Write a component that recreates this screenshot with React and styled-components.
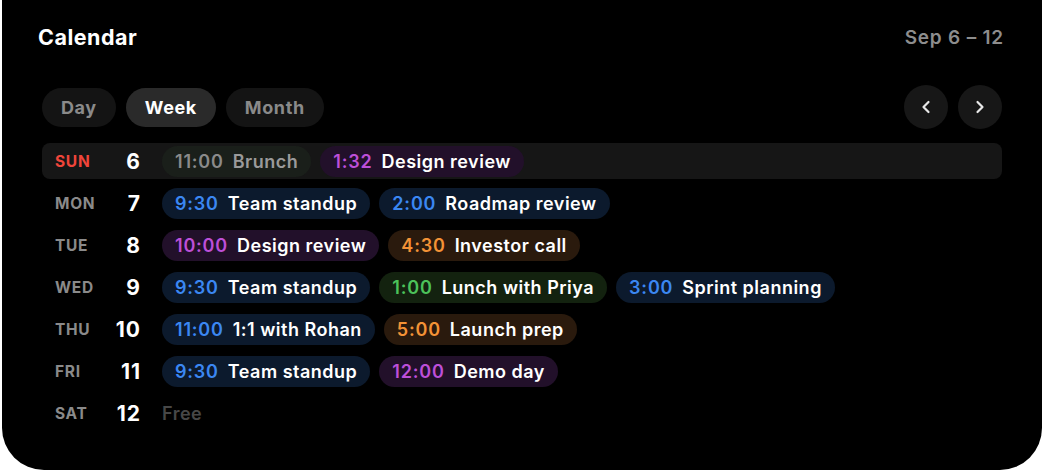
import React from "react";
import styled, { createGlobalStyle } from "styled-components";

const Global = createGlobalStyle`
  html, body { margin: 0; padding: 0; background: #ffffff; }
  body { font-family: Inter, "Noto Sans", "Liberation Sans", sans-serif; -webkit-font-smoothing: antialiased; }
`;

const Card = styled.div`
  margin-left: 2px;
  width: 1040px;
  height: 470px;
  box-sizing: border-box;
  background: #000;
  border-radius: 0 0 42px 42px;
  padding: 23px 40px 0 40px;
  display: flex;
  flex-direction: column;
`;

const Header = styled.div`
  height: 28px;
  display: flex;
  align-items: center;
  justify-content: space-between;
`;

const Title = styled.h1`
  margin: 0 0 0 -4px;
  font-size: 21.5px;
  font-weight: 700;
  color: #fff;
  letter-spacing: 0.5px;
`;

const Range = styled.span`
  font-size: 19px;
  font-weight: 600;
  color: #8d8d8d;
  letter-spacing: 0.8px;
  margin-right: -2px;
`;

const Toolbar = styled.div`
  margin-top: 34px;
  height: 44px;
  display: flex;
  align-items: center;
  justify-content: space-between;
`;

const Tabs = styled.div`
  display: flex;
  gap: 10px;
`;

const Tab = styled.button`
  height: 39px;
  padding: 0 19px;
  border: none;
  border-radius: 20px;
  font-family: inherit;
  font-size: 18px;
  font-weight: 700;
  letter-spacing: 0.6px;
  background: ${p => (p.$active ? "#2a2a2a" : "#141414")};
  color: ${p => (p.$active ? "#ffffff" : "#8a8a8a")};
`;

const Nav = styled.div`
  display: flex;
  gap: 10px;
`;

const NavBtn = styled.button`
  width: 44px;
  height: 44px;
  border-radius: 50%;
  border: none;
  background: #171717;
  display: flex;
  align-items: center;
  justify-content: center;
  padding: 0;
`;

const Rows = styled.div`
  margin-top: 14px;
  display: flex;
  flex-direction: column;
  gap: 6px;
`;

const Row = styled.div`
  height: 36px;
  display: flex;
  align-items: center;
  padding-left: 13px;
  border-radius: 8px;
  background: ${p => (p.$today ? "#161616" : "transparent")};
`;

const DayName = styled.span`
  width: 44px;
  font-size: 15.5px;
  font-weight: 700;
  letter-spacing: 0.7px;
  color: ${p => (p.$today ? "#f0453a" : "#8a8a8a")};
`;

const DayNum = styled.span`
  width: 42px;
  text-align: right;
  font-size: 21px;
  font-weight: 700;
  letter-spacing: 1px;
  color: #fff;
`;

const Events = styled.div`
  margin-left: 21px;
  display: flex;
  gap: 9px;
  align-items: center;
`;

const palette = {
  blue: { bg: "#0c1a2d", time: "#3b87f2", text: "#ffffff" },
  purple: { bg: "#22102a", time: "#bd4fd8", text: "#ffffff" },
  orange: { bg: "#2a1a0d", time: "#f39236", text: "#ffffff" },
  green: { bg: "#13220f", time: "#4cc25a", text: "#ffffff" },
  past: { bg: "#1a1f1a", time: "#8a8a8a", text: "#9a9a9a" },
};

const Chip = styled.div`
  height: 31px;
  display: flex;
  align-items: center;
  gap: 9px;
  padding: 0 13px;
  border-radius: 16px;
  background: ${p => palette[p.$c].bg};
  font-size: 18px;
  font-weight: 600;
  letter-spacing: 0.5px;
  white-space: nowrap;
`;

const Time = styled.span`
  color: ${p => palette[p.$c].time};
  letter-spacing: 0.8px;
`;

const Name = styled.span`
  color: ${p => palette[p.$c].text};
`;

const Free = styled.span`
  font-size: 18px;
  font-weight: 600;
  letter-spacing: 0.5px;
  color: #474747;
`;

const days = [
  { d: "SUN", n: 6, today: true, ev: [["11:00", "Brunch", "past"], ["1:32", "Design review", "purple"]] },
  { d: "MON", n: 7, ev: [["9:30", "Team standup", "blue"], ["2:00", "Roadmap review", "blue"]] },
  { d: "TUE", n: 8, ev: [["10:00", "Design review", "purple"], ["4:30", "Investor call", "orange"]] },
  { d: "WED", n: 9, ev: [["9:30", "Team standup", "blue"], ["1:00", "Lunch with Priya", "green"], ["3:00", "Sprint planning", "blue"]] },
  { d: "THU", n: 10, ev: [["11:00", "1:1 with Rohan", "blue"], ["5:00", "Launch prep", "orange"]] },
  { d: "FRI", n: 11, ev: [["9:30", "Team standup", "blue"], ["12:00", "Demo day", "purple"]] },
  { d: "SAT", n: 12, ev: [] },
];

const Chevron = ({ dir }) => (
  <svg width="16" height="16" viewBox="0 0 16 16" fill="none">
    <path
      d={dir === "left" ? "M10.5 3 L5.5 8 L10.5 13" : "M5.5 3 L10.5 8 L5.5 13"}
      stroke="#e8e8e8"
      strokeWidth="2.2"
      strokeLinecap="round"
      strokeLinejoin="round"
    />
  </svg>
);

export default function App() {
  return (
    <>
      <Global />
      <Card>
        <Header>
          <Title>Calendar</Title>
          <Range>Sep 6 – 12</Range>
        </Header>
        <Toolbar>
          <Tabs>
            <Tab>Day</Tab>
            <Tab $active>Week</Tab>
            <Tab>Month</Tab>
          </Tabs>
          <Nav>
            <NavBtn aria-label="Previous"><Chevron dir="left" /></NavBtn>
            <NavBtn aria-label="Next"><Chevron dir="right" /></NavBtn>
          </Nav>
        </Toolbar>
        <Rows>
          {days.map(day => (
            <Row key={day.d} $today={day.today}>
              <DayName $today={day.today}>{day.d}</DayName>
              <DayNum>{day.n}</DayNum>
              <Events>
                {day.ev.length === 0 ? (
                  <Free>Free</Free>
                ) : (
                  day.ev.map(([t, name, c], i) => (
                    <Chip key={i} $c={c}>
                      <Time $c={c}>{t}</Time>
                      <Name $c={c}>{name}</Name>
                    </Chip>
                  ))
                )}
              </Events>
            </Row>
          ))}
        </Rows>
      </Card>
    </>
  );
}
